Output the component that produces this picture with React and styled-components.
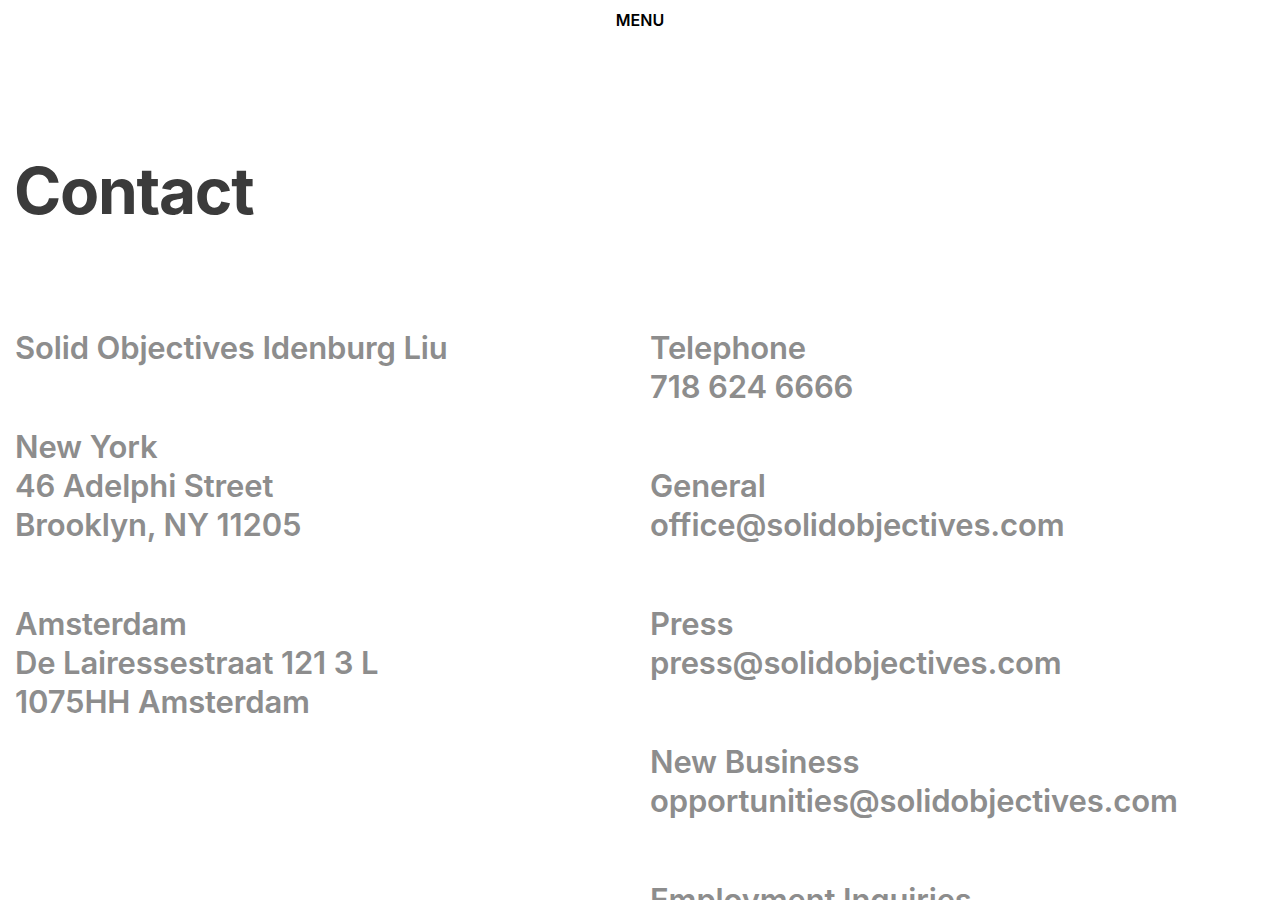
import React from "react";
import styled, { createGlobalStyle } from "styled-components";

const Global = createGlobalStyle`
  html, body { margin: 0; padding: 0; background: #fff; }
  body { font-family: Inter, "Noto Sans", sans-serif; -webkit-font-smoothing: antialiased; }
  * { box-sizing: border-box; }
`;

const Page = styled.div`
  width: 1280px;
  height: 900px;
  overflow: hidden;
`;

const Header = styled.header`
  height: 40px;
  display: flex;
  align-items: center;
  justify-content: center;
`;

const MenuButton = styled.button`
  border: 0;
  background: none;
  padding: 0;
  font-family: Inter, sans-serif;
  font-size: 16px;
  font-weight: 600;
  color: #000;
  letter-spacing: 0;
  cursor: pointer;
`;

const Title = styled.h1`
  margin: 0;
  padding: 118px 14px 0;
  font-size: 64px;
  line-height: 66px;
  font-weight: 700;
  color: #3b3b3b;
  letter-spacing: -1.3px;
`;

const Columns = styled.div`
  display: grid;
  grid-template-columns: 1fr 1fr;
  column-gap: 20px;
  padding: 104px 15px 0;
`;

const Column = styled.div`
  display: flex;
  flex-direction: column;
  gap: 60px;
`;

const Block = styled.p`
  margin: 0;
  font-size: 31px;
  line-height: 39px;
  font-weight: 600;
  color: #8d8d8d;
  letter-spacing: -0.15px;
`;

const Line = styled.span`
  display: block;
  white-space: nowrap;
`;

const left = [
  ["Solid Objectives Idenburg Liu"],
  ["New York", "46 Adelphi Street", "Brooklyn, NY 11205"],
  ["Amsterdam", "De Lairessestraat 121 3 L", "1075HH Amsterdam"],
];

const right = [
  ["Telephone", "718 624 6666"],
  ["General", "office@solidobjectives.com"],
  ["Press", "press@solidobjectives.com"],
  ["New Business", "opportunities@solidobjectives.com"],
  ["Employment Inquiries", "jobs@solidobjectives.com"],
];

const renderBlocks = (blocks) =>
  blocks.map((lines, i) => (
    <Block key={i}>
      {lines.map((l) => (
        <Line key={l}>{l}</Line>
      ))}
    </Block>
  ));

export default function App() {
  return (
    <Page>
      <Global />
      <Header>
        <MenuButton>MENU</MenuButton>
      </Header>
      <Title>Contact</Title>
      <Columns>
        <Column>{renderBlocks(left)}</Column>
        <Column>{renderBlocks(right)}</Column>
      </Columns>
    </Page>
  );
}
